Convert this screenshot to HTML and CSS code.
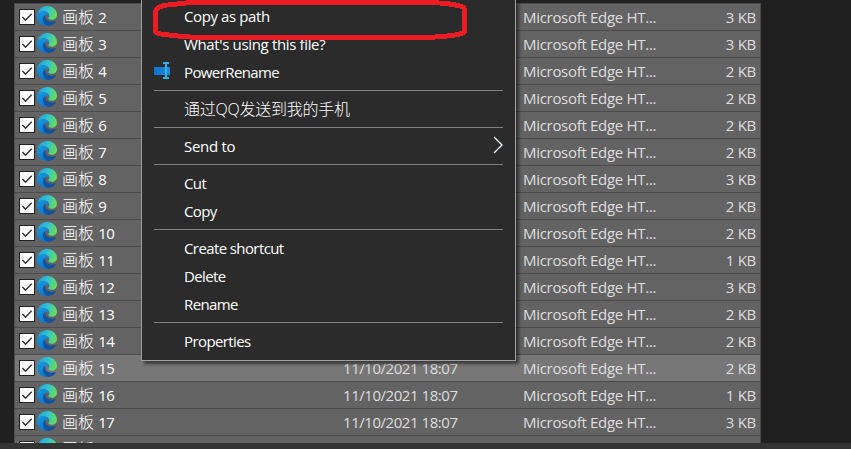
FILE: index.html
```
<!DOCTYPE html>
<html lang="en">
<head>
<meta charset="utf-8">
<title>Files</title>
<link rel="stylesheet" href="styles.css">
</head>
<body>
<svg class="defs" width="0" height="0">
  <defs>
    <linearGradient id="top" x1="0" y1="0.3" x2="1" y2="0.6"><stop offset="0" stop-color="#1f9fd8"/><stop offset=".45" stop-color="#2fc3d6"/><stop offset="1" stop-color="#6bdd55"/></linearGradient>
    <linearGradient id="left" x1="0" y1="0" x2="0.5" y2="1"><stop offset="0" stop-color="#169be0"/><stop offset="1" stop-color="#0878d4"/></linearGradient>
    <linearGradient id="pr" x1="0" y1="0" x2="1" y2="0"><stop offset="0" stop-color="#0a74d1"/><stop offset="1" stop-color="#2089dd"/></linearGradient>
  </defs>
  <symbol id="edge" viewBox="0 0 20 20">
    <path d="M.3 9C1 3.500 5 0 10 0c6 0 10 4.300 10 8.700 0 3.300-2.500 5-5.300 5-2.200 0-3.300-.8-3.300-1.500 0-.6.900-1 .9-2.400C12.300 7.500 10 5.300 6.800 5.300 3.500 5.300 1.200 7 .3 9z" fill="url(#top)"/>
    <path d="M.1 10.300C.2 7 3 5.200 6.500 5.200c3.500 0 5.700 2.200 5.700 4.300-.8-1-2.200-1.300-3.400-.7-2.300 1.300-3 4-2.300 6.400.6 2.300 2.400 4 4.600 4.700C5 20.700 0 16 .1 10.300z" fill="url(#left)"/>
    <path d="M8.300 9c-2.300 1.500-2.600 4-2 6.200.7 2.600 2.800 4.500 5.300 4.700 3 0 5.900-1.900 7.300-4.400.2-.5-.2-.8-.6-.6-3.300 1.600-7.600.7-9.400-2C8 11.500 8 10 8.300 9z" fill="#12539f"/>
  </symbol>
</svg>
<main class="files" id="files"></main>
<div class="bottom-bar"></div>
<nav class="menu">
  <div class="item copy-path">Copy as path</div>
  <div class="item using">What's using this file?</div>
  <div class="item"><svg class="item-icon" width="17" height="17" viewBox="0 0 17 17"><path d="M0 5h16v8H0z" fill="url(#pr)"/><path d="M9 1h6M9 16h6M12 1v15" stroke="#2eb5e8" stroke-width="2" fill="none"/></svg>PowerRename</div>
  <hr>
  <div class="item cjk">通过QQ发送到我的手机</div>
  <hr>
  <div class="item send">Send to<svg class="arrow" width="10" height="18" viewBox="0 0 10 18"><path d="M1 1l8 8-8 8" fill="none" stroke="#f4ffff" stroke-width="1.300"/></svg></div>
  <hr>
  <div class="item">Cut</div>
  <div class="item">Copy</div>
  <hr>
  <div class="item">Create shortcut</div>
  <div class="item">Delete</div>
  <div class="item">Rename</div>
  <hr>
  <div class="item">Properties</div>
</nav>
<svg class="marker" width="330" height="44" viewBox="0 0 330 44"><path d="M36 3.500Q13 4.500 8.500 7.500Q5.500 9 5.500 14V31.500Q6 33.500 14 34.500Q30 36.500 46 37.500H276Q298 36.500 308 34.500Q314.500 33 314.500 31V10Q314.500 6.500 308 5.500Q295 2.500 275 2.500H36" fill="none" stroke="#ed1c24" stroke-width="5" stroke-linejoin="round" shape-rendering="crispEdges"/></svg>
<script src="files.js"></script>
</body>
</html>
```
FILE: styles.css
```
* { box-sizing: border-box; }
body {
  margin: 0;
  width: 851px;
  height: 449px;
  overflow: hidden;
  display: flex;
  flex-direction: column;
  background: #202020;
  color: #dedede;
  font: 15px/26px "Open Sans", "Noto Sans CJK SC", sans-serif;
  position: relative;
}
.defs { position: absolute; }
.files {
  width: 747px;
  height: 440px;
  margin: 3px 0 0 14px;
  overflow: hidden;
  border-right: 1px solid #4b4b4b;
  border-left: 1px solid #4b4b4b;
}
.row {
  display: grid;
  grid-template-columns: 328px 180px 150px 1fr;
  height: 27px;
  background: #636363;
  border-top: 1px solid #4b4b4b;
  white-space: nowrap;
}
.row.hover { background: #777; }
.name { display: flex; align-items: center; padding-left: 4px; color: #fff; }
.title { margin-left: 5px; font-size: 16px; font-weight: 300; }
.title span { font-weight: 400; font-size: 15px; letter-spacing: -.6px; }
.check {
  width: 16px;
  height: 16px;
  background: #fff;
  border: 1px solid #222;
  margin-right: 2px;
}
.check, .edge { display: block; flex: none; }
.edge { margin-top: -3px; }
.date { letter-spacing: -.45px; }
.type { letter-spacing: -.3px; }
.size { text-align: right; padding-right: 4px; letter-spacing: -.3px; }
.bottom-bar { height: 6px; background: #333; }
.menu {
  position: absolute;
  left: 141px;
  top: 0;
  width: 375px;
  height: 361px;
  padding-top: 2px;
  background: #2b2b2b;
  border: solid #a0a0a0;
  border-width: 0 1px 1px;
  box-shadow: 3px 3px 3px rgba(0, 0, 0, .5);
  color: #fff;
}
.item {
  height: 28px;
  line-height: 28px;
  padding: 0 12px 0 42px;
  display: flex;
  align-items: center;
  letter-spacing: -.6px;
  white-space: nowrap;
}
.copy-path { letter-spacing: -.4px; }
.using { letter-spacing: -.35px; }
.send { letter-spacing: -.3px; }
.item-icon { margin: -4px 13px 0 -30px; }
.arrow { margin-left: auto; margin-top: -2px; }
.cjk { font-weight: 300; font-size: 16px; letter-spacing: -.25px; }
.menu hr { border: 0; height: 1px; margin: 4px 12px; background: #808080; }
.marker { position: absolute; left: 150px; top: 0; }
```
FILE: files.js
```
const sizes = [3, 3, 2, 2, 2, 2, 3, 2, 2, 1, 3, 2, 2, 2, 1, 3];

const nameCell = number => `
    <div class="name">
      <svg class="check" viewBox="0 0 14 14"><path d="M2.500 7l3 3.200 6.200-6.400" fill="none" stroke="#333" stroke-width="1.500"/></svg>
      <svg class="edge" width="20" height="20"><use href="#edge"/></svg>
      <div class="title">画板 <span>${number}</span></div>
    </div>`;

const rows = sizes.map((kb, i) => `
  <div class="row${i === 13 ? ' hover' : ''}">${nameCell(i + 2)}
    <div class="date">11/10/2021 18:07</div>
    <div class="type">Microsoft Edge HT...</div>
    <div class="size">${kb} KB</div>
  </div>`);
rows.push(`<div class="row">${nameCell('')}</div>`);
document.getElementById('files').innerHTML = rows.join('');
```
